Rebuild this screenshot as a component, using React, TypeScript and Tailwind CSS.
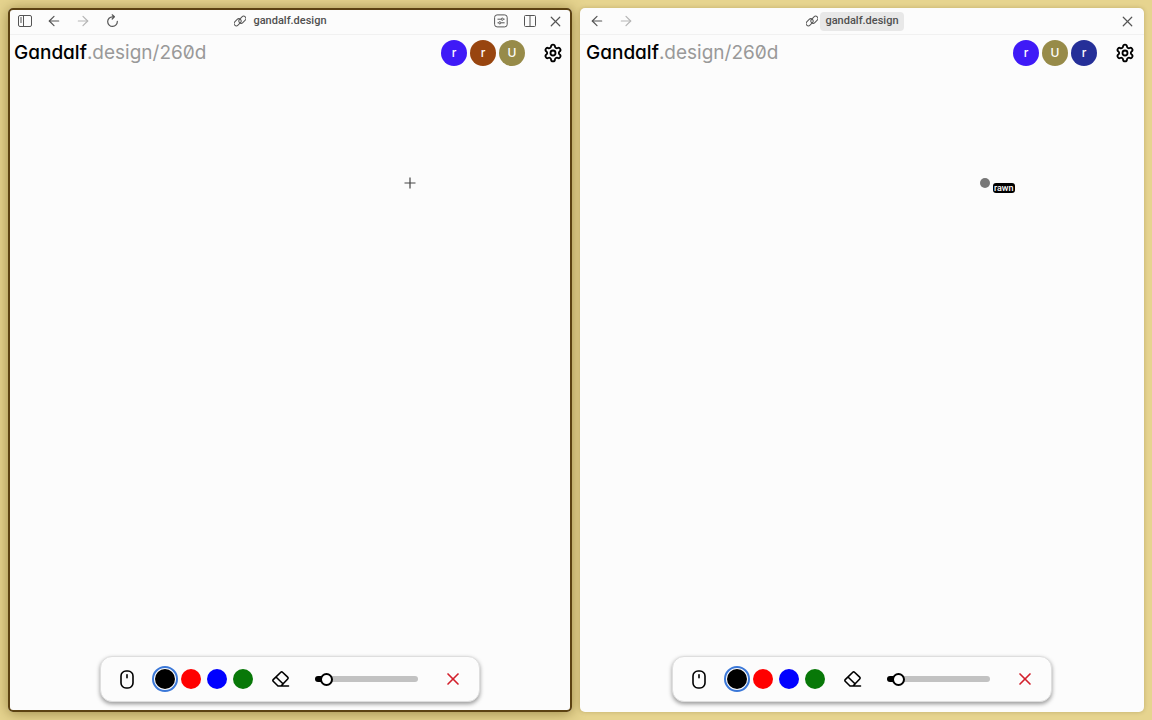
import { useState } from "react";
import type { ReactNode } from "react";
import { ArrowLeft, ArrowRight, Settings, X } from "lucide-react";
import clsx from "clsx";

type User = { initial: string; color: string };

const SWATCHES = [
  { name: "Black", className: "bg-black" },
  { name: "Red", className: "bg-[#ff0000]" },
  { name: "Blue", className: "bg-[#0000ff]" },
  { name: "Green", className: "bg-[#087808]" },
];

const LEFT_USERS: User[] = [
  { initial: "r", color: "bg-[#3f1af7]" },
  { initial: "r", color: "bg-[#98450f]" },
  { initial: "U", color: "bg-[#978b49]" },
];

const RIGHT_USERS: User[] = [
  { initial: "r", color: "bg-[#3f1af7]" },
  { initial: "U", color: "bg-[#978b49]" },
  { initial: "r", color: "bg-[#252f98]" },
];

export default function App() {
  return (
    <div className="grid min-h-screen grid-cols-2 gap-2 bg-[#e6d48f] p-2 font-['Inter','Liberation_Sans',sans-serif]">
      <BrowserPane active users={LEFT_USERS}>
        <svg
          className="absolute top-[106px] left-[396px] size-3"
          viewBox="0 0 12 12"
          stroke="#444"
          strokeWidth="1.2"
          aria-hidden="true"
        >
          <path d="M6 .5v11M.5 6h11" />
        </svg>
      </BrowserPane>
      <BrowserPane users={RIGHT_USERS}>
        <span className="absolute top-[107px] left-[400px] size-[10px] rounded-full bg-[#777]" />
        <span className="absolute top-[112px] left-[413px] rounded-[3px] bg-black px-px font-['Roboto',sans-serif] text-[9px] leading-[10px] font-medium text-white">
          rawn
        </span>
      </BrowserPane>
    </div>
  );
}

function BrowserPane({
  active = false,
  users,
  children,
}: {
  active?: boolean;
  users: User[];
  children: ReactNode;
}) {
  return (
    <section
      className={clsx(
        "flex min-w-0 flex-col rounded-[5px] bg-[#fcfcfc]",
        active
          ? "shadow-[0_1px_14px_rgba(80,60,0,0.5)] outline-2 -outline-offset-2 outline-[#5c4212]"
          : "relative shadow-[0_0_4px_rgba(80,60,0,0.25)]",
      )}
    >
      <BrowserBar active={active} />
      <header className="flex h-9 items-center justify-between pr-[9px] pl-[6px]">
        <h1 className="text-[19px] leading-6 text-[#999] [font-feature-settings:'zero','cv11']">
          <span className="font-medium text-black">Gandalf</span>.design/260d
        </h1>
        <div className="flex items-center">
          <ul className="flex gap-[3px]">
            {users.map((user, i) => (
              <li
                key={i}
                className={clsx(
                  "flex size-[26px] items-center justify-center rounded-full text-xs font-medium text-white",
                  user.color,
                )}
              >
                {user.initial}
              </li>
            ))}
          </ul>
          <button type="button" aria-label="Settings" className="ml-[18px]">
            <Settings size={20} strokeWidth={2.2} />
          </button>
        </div>
      </header>
      <main className="relative flex-1">{children}</main>
      <Toolbar />
    </section>
  );
}

function BrowserBar({ active }: { active: boolean }) {
  return (
    <nav className="grid h-[27px] grid-cols-[1fr_auto_1fr] items-center border-b border-[#f1f1f1] px-[7px] text-[#555]">
      <div className="flex items-center gap-[9px]">
        {active && (
          <BarButton label="Sidebar">
            <svg viewBox="0 0 14 12" className="w-[14px]" fill="none" stroke="currentColor">
              <rect x=".5" y=".5" width="13" height="11" rx="1.5" />
              <path d="M5.5.5v11M2 3h2M2 5h2M2 7h2" />
            </svg>
          </BarButton>
        )}
        <BarButton label="Back">
          <ArrowLeft size={16} strokeWidth={1.8} />
        </BarButton>
        <BarButton label="Forward">
          <ArrowRight size={16} strokeWidth={1.8} className="text-[#b5b5b5]" />
        </BarButton>
        {active && (
          <BarButton label="Reload">
            <svg
              viewBox="0 0 14 14"
              className="size-[14px]"
              fill="none"
              stroke="currentColor"
              strokeWidth="1.2"
              strokeLinecap="round"
              strokeLinejoin="round"
            >
              <path d="M12.3 7.4a4.8 4.8 0 1 1-4.8-4.6h1.6M7.2.8l2.2 2-2.2 2.2" />
            </svg>
          </BarButton>
        )}
        <svg
          viewBox="0 0 12 12"
          className="ml-auto size-3"
          fill="none"
          stroke="currentColor"
          aria-hidden="true"
        >
          <g transform="rotate(-45 6 6)">
            <rect x="-.6" y="2.9" width="8" height="4.6" rx="2.3" />
            <rect x="4.6" y="4.5" width="8" height="4.6" rx="2.3" />
          </g>
        </svg>
      </div>
      <button
        type="button"
        className={clsx(
          "mx-[2px] h-[19px] rounded-[4px] px-[5px] font-['Roboto',sans-serif] text-[11px] leading-4 font-medium text-[#505050]",
          !active && "bg-[#e8e8e8]",
        )}
      >
        gandalf.design
      </button>
      <div className="flex items-center justify-end gap-[5px]">
        {active && (
          <div className="flex gap-[9px]">
            <BarButton label="Site settings">
              <svg viewBox="0 0 14 14" className="size-[14px]" fill="none" stroke="currentColor">
                <rect x=".6" y=".9" width="12.6" height="12" rx="2.5" />
                <path d="M3.5 5.2h3.4M9.6 5.2h1M3.5 8.8h1M7.2 8.8h3.4" />
                <circle cx="8.3" cy="5.2" r="1.1" />
                <circle cx="5.8" cy="8.8" r="1.1" />
              </svg>
            </BarButton>
            <BarButton label="Split view">
              <svg viewBox="0 0 12 12" className="size-3" fill="none" stroke="currentColor">
                <rect x=".5" y=".5" width="11" height="11" rx="1" />
                <path d="M6 .5v11" />
              </svg>
            </BarButton>
          </div>
        )}
        <BarButton label="Close">
          <X size={17} strokeWidth={1.7} />
        </BarButton>
      </div>
    </nav>
  );
}

function BarButton({ label, children }: { label: string; children: ReactNode }) {
  return (
    <button type="button" aria-label={label} className="flex size-5 items-center justify-center">
      {children}
    </button>
  );
}

function Toolbar() {
  const [color, setColor] = useState("Black");
  const [size, setSize] = useState(6);
  // keep the end of the fill hidden behind the thumb
  const fill = `linear-gradient(to right, #000 ${size + 4}%, #c2c2c2 ${size + 4}%)`;

  return (
    <div className="mx-auto mb-[10px] flex h-[46px] items-center rounded-xl border border-[#dedede] bg-[#fcfcfc] px-4 shadow-[0_2px_4px_rgba(0,0,0,0.4)]">
      <button type="button" aria-label="Pointer" className="flex size-5 items-center justify-center">
        <svg
          viewBox="0 0 14 19"
          className="h-[19px] w-[14px]"
          fill="none"
          stroke="black"
          strokeWidth="1.6"
          strokeLinecap="round"
        >
          <rect x="1" y="1" width="12" height="17" rx="5" />
          <path d="M7 4.8v3" />
        </svg>
      </button>
      <div className="ml-[18px] flex gap-[6px]">
        {SWATCHES.map((swatch) => (
          <button
            key={swatch.name}
            type="button"
            aria-label={swatch.name}
            aria-pressed={color === swatch.name}
            onClick={() => setColor(swatch.name)}
            className={clsx(
              "size-5 rounded-full",
              swatch.className,
              color === swatch.name && "outline-2 outline-offset-1 outline-[#3b78d8]",
            )}
          />
        ))}
      </div>
      <button type="button" aria-label="Eraser" className="ml-[18px]">
        <svg
          viewBox="0 0 20 20"
          className="size-5"
          fill="none"
          stroke="currentColor"
          strokeWidth="1.6"
          strokeLinecap="round"
          strokeLinejoin="round"
        >
          <path d="M17.5 17H7L2.2 12.3a1.2 1.2 0 0 1 0-1.7l7.6-7.4a1.2 1.2 0 0 1 1.7 0l5.2 5a1.2 1.2 0 0 1 0 1.8L10 17M5 8l7.2 7" />
        </svg>
      </button>
      <input
        type="range"
        aria-label="Brush size"
        value={size}
        onChange={(e) => setSize(Number(e.target.value))}
        style={{ background: fill }}
        className="ml-6 h-[6px] w-[103px] appearance-none rounded-full [&::-webkit-slider-thumb]:size-[13px] [&::-webkit-slider-thumb]:appearance-none [&::-webkit-slider-thumb]:rounded-full [&::-webkit-slider-thumb]:border-2 [&::-webkit-slider-thumb]:border-black [&::-webkit-slider-thumb]:bg-white"
      />
      <button type="button" aria-label="Clear" className="ml-[25px] text-[#d3202c]">
        <X size={20} strokeWidth={2} />
      </button>
    </div>
  );
}
